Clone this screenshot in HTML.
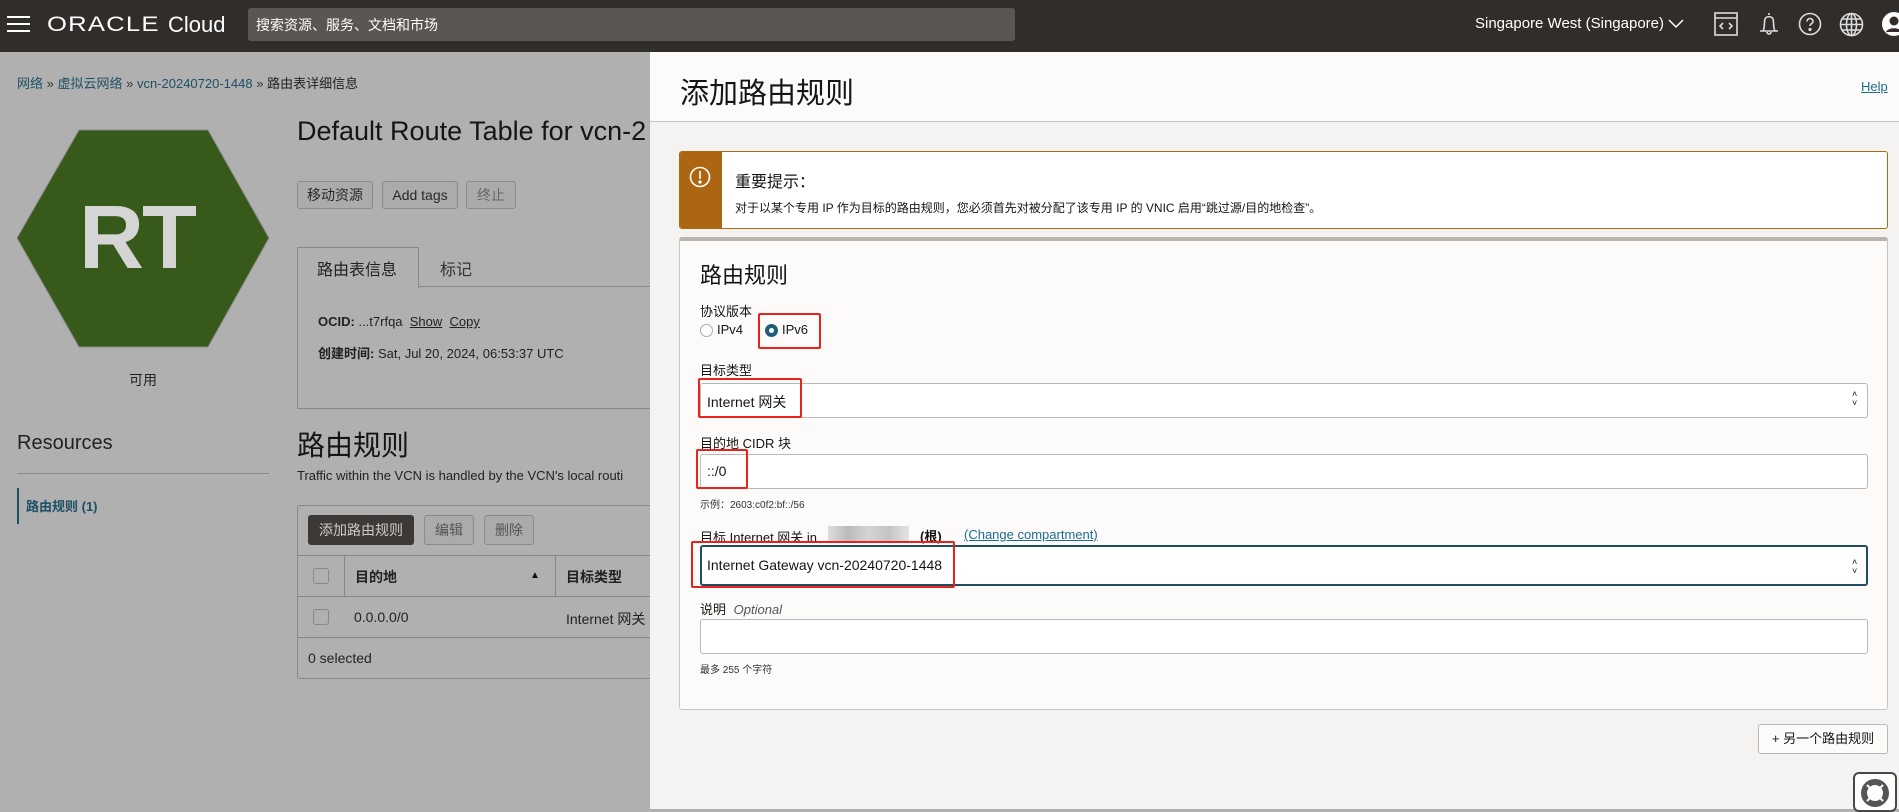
<!DOCTYPE html>
<html><head><meta charset="utf-8"><style>
*{box-sizing:border-box;margin:0;padding:0}
body{width:1899px;height:809px;overflow:hidden;position:relative;font-family:"Liberation Sans","Noto Sans CJK SC",sans-serif;background:#b0b0b0;color:#161513}
.a{position:absolute;white-space:nowrap}
.top{position:absolute;left:0;top:0;width:1899px;height:52px;background:#312d2a}
.btn{position:absolute;border:1px solid #8c8a87;border-radius:3px;background:#ababab;font-size:14px;color:#2b2927;text-align:center}
.lbl{position:absolute;font-size:13px;color:#161513;left:700px}
.inp{position:absolute;left:700px;width:1168px;background:#fff;border:1px solid #bcb8b3;border-radius:3px}
.red{position:absolute;border:2px solid #e8231e;border-radius:2px}
</style></head><body>
<div class="top"></div>
<div class="a" style="left:7px;top:16px;width:23px;height:2px;background:#fff"></div>
<div class="a" style="left:7px;top:23px;width:23px;height:2px;background:#fff"></div>
<div class="a" style="left:7px;top:30px;width:23px;height:2px;background:#fff"></div>
<div class="a" style="left:47px;top:13px;font-size:21px;color:#fff;letter-spacing:1px;transform:scaleX(1.22);transform-origin:left;font-weight:400">ORACLE</div>
<div class="a" style="left:168px;top:12px;font-size:22px;color:#fff">Cloud</div>
<div class="a" style="left:248px;top:8px;width:767px;height:33px;background:#5b5652;border-radius:3px"></div>
<div class="a" style="left:256px;top:15px;font-size:14px;color:#fff">搜索资源、服务、文档和市场</div>
<div class="a" style="left:1475px;top:15px;font-size:15px;color:#fff">Singapore West (Singapore)</div>
<svg class="a" style="left:1668px;top:19px" width="16" height="10"><path d="M1 1l7 7 7-7" stroke="#fff" stroke-width="1.5" fill="none"/></svg>
<svg class="a" style="left:1713px;top:11px" width="26" height="26" fill="none" stroke="#ddd" stroke-width="1.6"><rect x="2" y="2" width="22" height="22"/><path d="M2 7h22M10 12l-3 3 3 3M16 12l3 3-3 3"/></svg>
<svg class="a" style="left:1757px;top:11px" width="24" height="26" fill="none" stroke="#ddd" stroke-width="1.6"><path d="M12 2v2M6 20c2-3 1-9 2-12 1-3 7-3 8 0 1 3 0 9 2 12zM3 20h18M10 21a2 2 0 004 0"/></svg>
<svg class="a" style="left:1798px;top:12px" width="24" height="24" fill="none" stroke="#ddd" stroke-width="1.6"><circle cx="12" cy="12" r="10.5"/><path d="M9 9.5a3 3 0 116 0c0 2-3 2-3 4.5"/><circle cx="12" cy="17.5" r=".8" fill="#ddd"/></svg>
<svg class="a" style="left:1839px;top:12px" width="25" height="25" fill="none" stroke="#ddd" stroke-width="1.6"><circle cx="12.5" cy="12.5" r="11"/><ellipse cx="12.5" cy="12.5" rx="5" ry="11"/><path d="M1.5 12.5h22M3 7h19M3 18h19M12.5 1.5v22"/></svg>
<svg class="a" style="left:1881px;top:11px" width="18" height="26"><circle cx="13" cy="13" r="12" fill="#fff"/><circle cx="13" cy="10" r="4.5" fill="#312d2a"/><path d="M5 21c2-5 14-5 16 0" fill="#312d2a"/></svg>

<div class="a" style="left:17px;top:73px;font-size:13px;color:#1d4f66">网络 <span style="color:#333">»</span> 虚拟云网络 <span style="color:#333">»</span> vcn-20240720-1448 <span style="color:#333">»</span> <span style="color:#222">路由表详细信息</span></div>
<svg class="a" style="left:17px;top:129px" width="253" height="220"><polygon points="62,1 191,1 252,109 191,218 62,218 0,109" fill="#375a1a" stroke="#8a8a8a"/></svg>
<div class="a" style="left:79px;top:187px;font-size:90px;font-weight:700;color:#d5d5d5;letter-spacing:-2px">RT</div>
<div class="a" style="left:129px;top:370px;font-size:14px;color:#222">可用</div>
<div class="a" style="left:297px;top:116px;font-size:27px;color:#161513">Default Route Table for vcn-2</div>
<div class="btn" style="left:297px;top:181px;width:76px;height:28px;line-height:26px">移动资源</div>
<div class="btn" style="left:382px;top:181px;width:76px;height:28px;line-height:26px">Add tags</div>
<div class="btn" style="left:466px;top:181px;width:50px;height:28px;line-height:26px;color:#666">终止</div>
<div class="a" style="left:297px;top:287px;width:360px;height:122px;border:1px solid #888;border-top:none;border-right:none"></div>
<div class="a" style="left:418px;top:286px;width:240px;height:1px;background:#888"></div>
<div class="a" style="left:297px;top:247px;width:122px;height:41px;border:1px solid #888;border-bottom:none;background:#b0b0b0"></div>
<div class="a" style="left:317px;top:256px;font-size:16px;color:#222">路由表信息</div>
<div class="a" style="left:440px;top:256px;font-size:16px;color:#333">标记</div>
<div class="a" style="left:318px;top:314px;font-size:13px;color:#222"><b>OCID:</b> ...t7rfqa &nbsp;<u>Show</u> &nbsp;<u>Copy</u></div>
<div class="a" style="left:318px;top:343px;font-size:13px;color:#222"><b>创建时间:</b> Sat, Jul 20, 2024, 06:53:37 UTC</div>
<div class="a" style="left:17px;top:432px;font-size:20px;color:#222">Resources</div>
<div class="a" style="left:17px;top:473px;width:252px;height:1px;background:#888"></div>
<div class="a" style="left:17px;top:488px;width:2px;height:36px;background:#1d4f66"></div>
<div class="a" style="left:26px;top:496px;font-size:13px;font-weight:700;color:#1d4f66">路由规则 (1)</div>
<div class="a" style="left:297px;top:424px;font-size:28px;color:#161513">路由规则</div>
<div class="a" style="left:297px;top:468px;font-size:13px;color:#222">Traffic within the VCN is handled by the VCN's local routi</div>
<div class="a" style="left:297px;top:505px;width:360px;height:174px;border:1px solid #888;border-right:none;border-radius:3px 0 0 3px"></div>
<div class="a" style="left:308px;top:515px;width:106px;height:30px;background:#3d3936;border-radius:3px;color:#ccc;font-size:14px;line-height:30px;text-align:center">添加路由规则</div>
<div class="btn" style="left:424px;top:515px;width:50px;height:30px;line-height:28px;color:#555">编辑</div>
<div class="btn" style="left:484px;top:515px;width:50px;height:30px;line-height:28px;color:#555">删除</div>
<div class="a" style="left:297px;top:555px;width:353px;height:1px;background:#888"></div>
<div class="a" style="left:297px;top:596px;width:353px;height:1px;background:#888"></div>
<div class="a" style="left:297px;top:637px;width:353px;height:1px;background:#888"></div>
<div class="a" style="left:344px;top:556px;width:1px;height:40px;background:#888"></div>
<div class="a" style="left:555px;top:556px;width:1px;height:40px;background:#888"></div>
<div class="a" style="left:313px;top:568px;width:16px;height:16px;border:1px solid #888;border-radius:3px"></div>
<div class="a" style="left:313px;top:609px;width:16px;height:16px;border:1px solid #888;border-radius:3px"></div>
<div class="a" style="left:355px;top:567px;font-size:14px;font-weight:700;color:#222">目的地</div>
<div class="a" style="left:530px;top:570px;font-size:10px;color:#111">▲</div>
<div class="a" style="left:566px;top:567px;font-size:14px;font-weight:700;color:#222">目标类型</div>
<div class="a" style="left:354px;top:609px;font-size:14px;color:#222">0.0.0.0/0</div>
<div class="a" style="left:566px;top:609px;font-size:14px;color:#222">Internet 网关</div>
<div class="a" style="left:308px;top:650px;font-size:14px;color:#222">0 selected</div>

<div class="a" style="left:650px;top:52px;width:1249px;height:757px;background:#f4f3f1"></div>
<div class="a" style="left:650px;top:52px;width:1249px;height:70px;background:#fcfbfa;border-bottom:1px solid #c9c6c2"></div>
<div class="a" style="left:680px;top:70px;font-size:29px;color:#161513">添加路由规则</div>
<div class="a" style="left:1861px;top:79px;font-size:13px;color:#1d6c8f;text-decoration:underline">Help</div>
<div class="a" style="left:679px;top:151px;width:1209px;height:78px;background:#fff;border:1px solid #ae6a12;border-radius:3px;overflow:hidden"><div style="position:absolute;left:0;top:0;width:42px;height:78px;background:#ac6612"></div></div>
<svg class="a" style="left:689px;top:166px" width="22" height="22" fill="none" stroke="#fff" stroke-width="1.6"><circle cx="11" cy="11" r="9.5"/><path d="M11 5v8"/><circle cx="11" cy="16" r=".8" fill="#fff"/></svg>
<div class="a" style="left:735px;top:168px;font-size:16px;color:#161513">重要提示：</div>
<div class="a" style="left:735px;top:199px;font-size:12px;color:#161513">对于以某个专用 IP 作为目标的路由规则，您必须首先对被分配了该专用 IP 的 VNIC 启用“跳过源/目的地检查”。</div>
<div class="a" style="left:679px;top:237px;width:1209px;height:473px;background:#fcfbfa;border:1px solid #c9c6c2;border-top:4px solid #bab5ae;border-radius:3px"></div>
<div class="a" style="left:700px;top:258px;font-size:22px;color:#161513">路由规则</div>
<div class="lbl" style="top:301px">协议版本</div>
<div class="a" style="left:700px;top:324px;width:13px;height:13px;border:1px solid #aaa;border-radius:50%;background:#fff"></div>
<div class="a" style="left:717px;top:322px;font-size:13px">IPv4</div>
<div class="a" style="left:765px;top:324px;width:13px;height:13px;border-radius:50%;background:#1d5e7a"><div style="position:absolute;left:4px;top:4px;width:5px;height:5px;border-radius:50%;background:#fff"></div></div>
<div class="a" style="left:782px;top:322px;font-size:13px">IPv6</div>
<div class="red" style="left:758px;top:313px;width:63px;height:36px"></div>
<div class="lbl" style="top:360px">目标类型</div>
<div class="inp" style="top:383px;height:35px"></div>
<div class="a" style="left:707px;top:392px;font-size:14px">Internet 网关</div>
<div class="a" style="left:1852px;top:390px;font-size:9px;line-height:9px;text-align:center">˄<br>˅</div>
<div class="red" style="left:698px;top:378px;width:104px;height:40px"></div>
<div class="lbl" style="top:433px">目的地 CIDR 块</div>
<div class="inp" style="top:454px;height:35px"></div>
<div class="a" style="left:707px;top:463px;font-size:14px">::/0</div>
<div class="red" style="left:696px;top:449px;width:52px;height:40px"></div>
<div class="a" style="left:700px;top:496px;font-size:10px;color:#333">示例：2603:c0f2:bf::/56</div>
<div class="lbl" style="top:527px">目标 Internet 网关 in</div>
<div class="a" style="left:828px;top:526px;width:81px;height:16px;background:linear-gradient(90deg,#ddd,#bbb,#d5d5d5,#c4c4c4,#e5e5e5)"></div>
<div class="a" style="left:920px;top:526px;font-size:13px;font-weight:700">(根)</div>
<div class="a" style="left:964px;top:527px;font-size:13px;color:#1d6c8f;text-decoration:underline">(Change compartment)</div>
<div class="inp" style="top:545px;height:41px;border:2px solid #1d4f61"></div>
<div class="a" style="left:707px;top:557px;font-size:14px">Internet Gateway vcn-20240720-1448</div>
<div class="a" style="left:1852px;top:558px;font-size:9px;line-height:9px;text-align:center">˄<br>˅</div>
<div class="red" style="left:691px;top:541px;width:264px;height:47px"></div>
<div class="lbl" style="top:599px">说明 <i style="color:#555;margin-left:4px">Optional</i></div>
<div class="inp" style="top:619px;height:35px"></div>
<div class="a" style="left:700px;top:661px;font-size:10px;color:#333">最多 255 个字符</div>
<div class="a" style="left:1758px;top:724px;width:130px;height:30px;background:#fcfbfa;border:1px solid #bcb8b3;border-radius:3px;font-size:13px;line-height:28px;text-align:center;color:#161513">+ 另一个路由规则</div>
<div class="a" style="left:1853px;top:772px;width:44px;height:40px;background:#fff;border:2px solid #4a4744;border-radius:6px"></div>
<svg class="a" style="left:1860px;top:778px" width="30" height="30" fill="none" stroke="#555"><circle cx="15" cy="15" r="11" stroke-width="6"/><path d="M7 7l5 5M23 7l-5 5M7 23l5-5M23 23l-5-5" stroke="#fff" stroke-width="2"/></svg>
</body></html>
